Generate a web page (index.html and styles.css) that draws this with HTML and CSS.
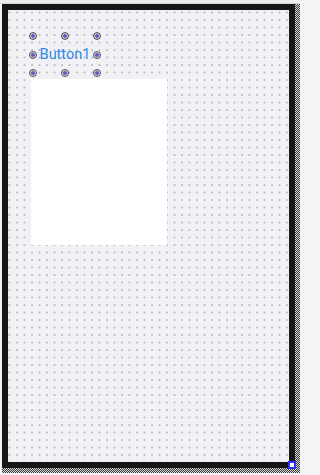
FILE: index.html
```html
<!DOCTYPE html>
<html>
<head>
<meta charset="utf-8">
<link rel="stylesheet" href="styles.css">
</head>
<body>
<div class="topbar"></div>
<div class="stage">
  <div class="shadow">
    <div class="frame">
      <div class="canvas">
        <div class="button">
          <span class="label">Button1</span>
          <span class="h h-tl"></span><span class="h h-tc"></span><span class="h h-tr"></span>
          <span class="h h-ml"></span><span class="h h-mr"></span>
          <span class="h h-bl"></span><span class="h h-bc"></span><span class="h h-br"></span>
        </div>
        <div class="panel"></div>
      </div>
      <span class="corner"></span>
    </div>
  </div>
</div>
</body>
</html>
```
FILE: styles.css
```css
html, body {
  margin: 0;
  padding: 0;
}
html {
  background: #f4f4f4;
}
body {
  width: 300px;
  height: 475px;
  background: #f4f4f4;
  overflow: hidden;
  font-family: Roboto, "Noto Sans", sans-serif;
}
.topbar {
  height: 3px;
  background: #ececec;
  border-bottom: 1px solid #d6d6d6;
}
.stage {
  padding-left: 2px;
}
.shadow {
  width: 298px;
  padding: 0 5px 5px 0;
  box-sizing: border-box;
  background-color: #f4f4f4;
  background-image: repeating-conic-gradient(#3a3a3a 0 25%, #d8d8d8 0 50%);
  background-size: 2px 2px;
}
.frame {
  position: relative;
  border: 6px solid #161616;
  width: 281px;
  height: 452px;
}
.canvas {
  width: 100%;
  height: 100%;
  background-color: #f2f1f6;
  background-image: radial-gradient(circle at 1px 1px, #b4b4be 0.6px, transparent 1px);
  background-size: 7.5px 7.5px;
  background-position: 0.5px 1.5px;
  display: flex;
  flex-direction: column;
  align-items: flex-start;
  overflow: hidden;
}
.button {
  position: relative;
  margin: 26px 0 0 25px;
  width: 64px;
  height: 37px;
  display: flex;
  align-items: center;
  justify-content: center;
}
.label {
  color: #2a8ae6;
  font-size: 14.5px;
  line-height: 1;
  margin-top: 1px;
}
.h {
  position: absolute;
  width: 8px;
  height: 8px;
  box-sizing: border-box;
  border-radius: 50%;
  border: 1px solid #55555f;
  background: radial-gradient(circle, #5a5ac8 0 1.5px, #c2c2cc 2px);
}
.h-tl { left: -4px; top: -4px; }
.h-tc { left: 28px; top: -4px; }
.h-tr { left: 60px; top: -4px; }
.h-ml { left: -4px; top: 14.5px; }
.h-mr { left: 60px; top: 14.5px; }
.h-bl { left: -4px; top: 33px; }
.h-bc { left: 28px; top: 33px; }
.h-br { left: 60px; top: 33px; }
.panel {
  margin: 6px 0 0 23px;
  width: 136px;
  height: 166px;
  background: #ffffff;
}
.corner {
  position: absolute;
  right: -7px;
  bottom: -7px;
  width: 8px;
  height: 8px;
  box-sizing: border-box;
  border: 2px solid #2f2fff;
  background: #ffffff;
}
```
